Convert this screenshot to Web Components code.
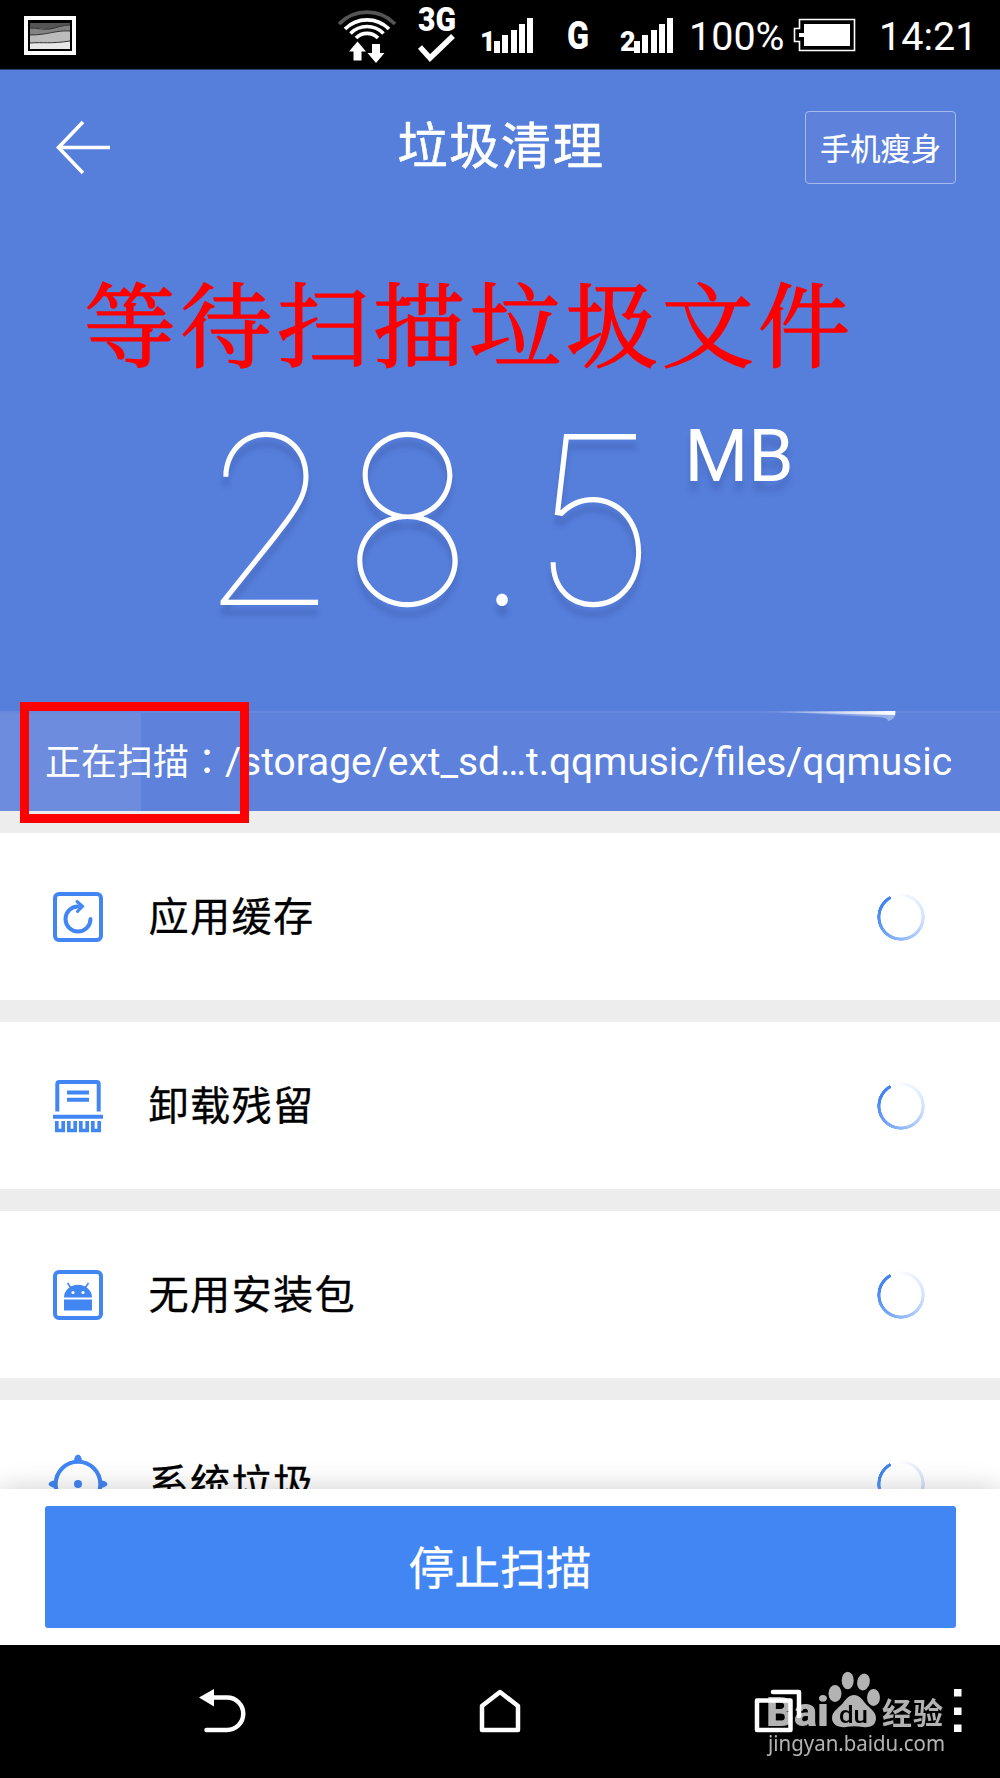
<!DOCTYPE html>
<html lang="zh-CN">
<head>
<meta charset="utf-8">
<title>垃圾清理</title>
<style>
  body {
    margin: 0;
    width: 1000px;
    height: 1778px;
    overflow: hidden;
    background: #ededed;
    font-family: Roboto, "Noto Sans CJK SC", sans-serif;
  }
</style>
</head>
<body>
<cleaner-app></cleaner-app>

<script>
/**
 * Creates a template from a string of markup.
 */
const html = (markup) => {
  const template = document.createElement('template')
  template.innerHTML = markup
  return template
}

/**
 * Registers an element that only shows its template.
 */
const define = (name, template) => {
  customElements.define(name, class extends HTMLElement {
    constructor () {
      super()
      this.attachShadow({ mode: 'open' })
        .appendChild(template.content.cloneNode(true))
    }
  })
}

// Signal bars with the number of the sim card.
define('signal-bars', html(`
  <style>
    :host { display: block; width: 55px; height: 36px; }
    .bars { display: flex; align-items: flex-end; gap: 2.2px; height: 36px; }
    .sim { width: 12px; font: 900 27px/20px Roboto, sans-serif; height: 21px; }
    i { width: 6px; background: #fff; }
  </style>
  <div class="bars">
    <span class="sim"><slot></slot></span>
    <i style="height: 12px"></i>
    <i style="height: 18px"></i>
    <i style="height: 23px"></i>
    <i style="height: 29px"></i>
    <i style="height: 35px"></i>
  </div>
`))

define('status-bar', html(`
  <style>
    :host {
      display: flex;
      align-items: flex-start;
      box-sizing: border-box;
      height: 70px;
      background: #000;
      border-bottom: 1px solid #2c4070;
      color: #fff;
    }
    svg { display: block; flex: none; }
    signal-bars { margin-top: 16.500px; flex: none; }
    .text { font-size: 39.500px; line-height: 47px; margin-top: 13px; flex: none; white-space: nowrap; }
  </style>
  <svg width="54" height="56" style="margin-left: 24px">
    <rect x="2" y="18" width="48" height="35" fill="#000" stroke="#fff" stroke-width="4"/>
    <rect x="6" y="23" width="40" height="26" fill="#bbb"/>
    <path d="M6 23h40v2c-8 0-13 6-22 4-6 0-10-1-18-1z" fill="#555"/>
    <path d="M6 28c8 0 14 2 20 1s12-4 20-4v6c-14-1-22 4-40 4z" fill="#828282"/>
    <path d="M6 43c14-1 20 1 40-2v8H6z" fill="#e8e8e8"/>
    <path d="M6 28c8 0 14 2 20 1s12-4 20-4M6 35c18 0 26-5 40-4M6 43c14-1 20 1 40-2" fill="none" stroke="#333"/>
  </svg>
  <svg width="60" height="66" style="margin-left: 259px" fill="none" stroke="#fff" stroke-width="3.600">
    <path d="M2 24A39 39 0 0 1 58 24" stroke="#555"/>
    <path d="M8 29A31 31 0 0 1 52 29"/>
    <path d="M13.500 33.500A23 23 0 0 1 46.500 33.500"/>
    <path d="M19 38A15.500 15.500 0 0 1 41 38"/>
    <path d="M20.500 41.500l8.500 10h-4.500v9h-8v-9H12zM39 63l8.500-10H43v-9h-8v9h-4.500z" fill="#fff" stroke="none"/>
  </svg>
  <svg width="44" height="66" style="margin-left: 19px">
    <text x="2" y="31" font-family="Roboto, sans-serif" font-weight="900" font-size="33" fill="#fff" textLength="38" lengthAdjust="spacingAndGlyphs">3G</text>
    <path d="M4 47l10 11 23-22" fill="none" stroke="#fff" stroke-width="5.500"/>
  </svg>
  <signal-bars style="margin-left: 20px">1</signal-bars>
  <svg width="28" height="60" style="margin-left: 31px">
    <text x="1" y="48.500" font-family="Roboto, sans-serif" font-weight="900" font-size="38" fill="#fff" textLength="22" lengthAdjust="spacingAndGlyphs">G</text>
  </svg>
  <signal-bars style="margin-left: 26px">2</signal-bars>
  <span class="text" style="margin-left: 14px; width: 97px">100%</span>
  <svg width="64" height="56" style="margin-left: 7px" fill="none" stroke="#fff" stroke-width="1.600">
    <path d="M6.500 19.500h55v31h-55v-9H1.500v-13h5z"/>
    <path d="M11 24h46v22H11v-9H6v-4h5z" fill="#fff" stroke="none"/>
  </svg>
  <span class="text" style="margin-left: 22px">14:21</span>
`))

define('title-bar', html(`
  <style>
    :host {
      display: grid;
      grid-template-columns: 1fr auto 1fr;
      align-items: center;
      height: 154px;
      padding: 0 44px 0 56px;
      color: #fff;
    }
    h1 { margin: 0 0 0 -10px; font-size: 50.200px; font-weight: 400; line-height: 60px; letter-spacing: 1.500px; -webkit-text-stroke: .6px; }
    button {
      justify-self: end;
      box-sizing: border-box;
      width: 151px;
      height: 73px;
      padding: 0 0 2px;
      margin-top: 1px;
      border: 1px solid #a6bbec;
      border-radius: 4px;
      background: #5e82db;
      color: #fff;
      font: 30.300px "Noto Sans CJK SC", sans-serif;
      -webkit-text-stroke: .2px;
    }
  </style>
  <svg width="56" height="56" viewBox="0 0 56 56" fill="none" stroke="#fff" stroke-width="3.600">
    <path d="M27 3L2.500 28.500 27 54M2 28.500h52"/>
  </svg>
  <h1><slot></slot></h1>
  <button>手机瘦身</button>
`))

define('scan-total', html(`
  <style>
    :host { display: block; height: 487px; color: #fff; }
    p {
      box-sizing: border-box;
      height: 156px;
      margin: 0 0 0 84px;
      padding-top: 40px;
      font: 92px/112px "Noto Serif CJK SC", "Noto Sans CJK SC", serif;
      letter-spacing: 4.300px;
      color: #f00;
      white-space: nowrap;
      -webkit-text-stroke: 1.500px;
    }
    .total {
      display: flex;
      align-items: flex-start;
      margin-left: 199.500px;
      text-shadow: 0 10px 6px rgba(50, 80, 150, .3);
    }
    .size {
      flex: none;
      width: 485px;
      font: 100 235px/280px Inter, sans-serif;
      letter-spacing: 3.400px;
      transform: scaleX(.945);
      transform-origin: left;
    }
    .unit { font-size: 73px; line-height: 86px; margin-top: 33px; }
  </style>
  <p><slot name="hint"></slot></p>
  <div class="total">
    <span class="size"><slot name="size"></slot></span>
    <span class="unit"><slot name="unit"></slot></span>
  </div>
`))

define('scan-path', html(`
  <style>
    :host {
      display: flex;
      align-items: center;
      position: relative;
      box-sizing: border-box;
      height: 100px;
      padding-left: 45px;
      border-top: 2px solid #6688de;
      background: linear-gradient(90deg, #6d8cde 141px, #5e82db 141px);
      color: #fff;
      font-size: 36px;
      white-space: nowrap;
    }
    .state, .colon { padding-bottom: 7px; }
    .colon { font-family: "Noto Sans CJK TC"; }
    .path { font-size: 38.900px; padding-bottom: 2px; }
    .streak { position: absolute; left: 760px; top: -2px; }
    .mark {
      position: absolute;
      left: 19.500px;
      top: -11px;
      box-sizing: border-box;
      width: 229.500px;
      height: 121px;
      border: 9px solid #f00;
    }
  </style>
  <svg class="streak" width="140" height="14">
    <defs>
      <linearGradient id="glow"><stop stop-color="#fff" stop-opacity="0"/><stop offset="1" stop-color="#fff"/></linearGradient>
    </defs>
    <path d="M0 0h136q0 8-8 10 0-4-12-4z" fill="url(#glow)" opacity=".4"/>
    <path d="M0 1L135 0v4z" fill="url(#glow)"/>
  </svg>
  <span class="state">正在扫描</span><span class="colon">：</span><span class="path"><slot></slot></span>
  <div class="mark"></div>
`))

// Ring that fades out clockwise from its round head.
define('loading-ring', html(`
  <style>
    :host { display: block; width: 48px; height: 48px; }
    div {
      width: 48px;
      height: 48px;
      border-radius: 50%;
      background: conic-gradient(from -28deg, rgba(66, 134, 243, 0) 4%, rgba(66, 134, 243, .25) 35%, rgba(66, 134, 243, .65) 62%, #4286f3 88%);
      mask: radial-gradient(circle closest-side, transparent 20.200px, #000 20.800px, #000 23.600px, transparent 24px);
    }
  </style>
  <div></div>
`))

const icons = {
  cache: `
    <rect x="7" y="7" width="46" height="46" rx="4"/>
    <path d="M30 19.500A12.500 12.500 0 1 0 42.500 32" stroke-linecap="round"/>
    <path d="M29 14.500l5.500 4.800-5 5.200" stroke-width="3" stroke-linecap="round"/>`,
  uninstall: `
    <path d="M9.300 35.500V8q0-2 2-2h37.400q2 0 2 2v27.500M19 16.500h22M19 23.800h22M5 40.700h50"/>
    <path d="M8.800 45v9.500h6.400v-9.500M20.800 45v9.500h6.400v-9.500M32.800 45v9.500h6.400v-9.500M44.800 45v9.500h6.400v-9.500" stroke-width="3.700"/>`,
  apk: `
    <rect x="7" y="7" width="46" height="46" rx="4"/>
    <path d="M16 32.500a14 12.700 0 0 1 28 0zM16 34.500h28v11H16z" fill="#4286f3" stroke="none"/>
    <path d="M19.500 18l3.500 5M40.500 18l-3.500 5" stroke-width="1.600"/>
    <circle cx="25" cy="27.500" r="1.600" fill="#fff" stroke="none"/><circle cx="35" cy="27.500" r="1.600" fill="#fff" stroke="none"/>`,
  system: `
    <circle cx="30" cy="30" r="22.300"/>
    <circle cx="30" cy="30" r="4" fill="#4286f3" stroke="none"/>
    <path d="M26 8q0-7 4-7.500 4 .5 4 7.500zM8 26q-7 1-7.500 4 .5 3 7.500 4zM52 26q7 1 7.500 4-.5 3-7.500 4z" fill="#4286f3" stroke="none"/>`
}

customElements.define('scan-item',

  /**
   * One kind of junk in the list, with an icon and a loading ring.
   */
  class extends HTMLElement {
    constructor () {
      super()
      this.attachShadow({ mode: 'open' }).innerHTML = `
        <style>
          :host {
            display: flex;
            align-items: center;
            box-sizing: border-box;
            flex: none;
            height: 167px;
            padding: 0 75px 0 47.500px;
            background: #fff;
            color: #000;
            font-size: 40.200px;
            letter-spacing: 1.300px;
          }
          svg { margin-top: 1px; }
          .label { flex: 1; margin: 3px 0 0 41px; line-height: 60px; -webkit-text-stroke: .3px; }
        </style>
        <svg width="60" height="60" fill="none" stroke="#4286f3" stroke-width="4"></svg>
        <span class="label"><slot></slot></span>
        <loading-ring></loading-ring>
      `
    }

    connectedCallback () {
      this.shadowRoot.querySelector('svg').innerHTML = icons[this.getAttribute('icon')]
    }
  }
)

define('scan-list', html(`
  <style>
    :host {
      display: flex;
      flex-direction: column;
      gap: 22px;
      box-sizing: border-box;
      height: 678px;
      padding-top: 22px;
      overflow: hidden;
    }
  </style>
  <slot></slot>
`))

define('stop-panel', html(`
  <style>
    :host {
      display: block;
      position: relative;
      box-sizing: border-box;
      height: 156px;
      padding: 17px 44.500px 0;
      background: #fff;
      box-shadow: 0 0 26px rgba(0, 0, 0, .2);
    }
    button {
      display: block;
      width: 100%;
      height: 122px;
      padding: 0 0 4px;
      border: 0;
      border-radius: 3px;
      background: #4286f3;
      color: #fff;
      font: 45.800px "Noto Sans CJK SC", sans-serif;
      -webkit-text-stroke: .3px;
    }
  </style>
  <button><slot></slot></button>
`))

define('nav-bar', html(`
  <style>
    :host { display: flex; align-items: flex-start; position: relative; height: 133px; padding-top: 40px; box-sizing: border-box; background: #000; }
    svg { flex: none; }
  </style>
  <svg width="50" height="52" style="margin-left: 199px" fill="none" stroke="#fff" stroke-width="4.500" stroke-linecap="round">
    <path d="M12 12.500h16a16 16 0 0 1 0 32.500H7.500"/>
    <path d="M0 12.500L15 4v17.500z" fill="#fff" stroke="none"/>
  </svg>
  <svg width="44" height="52" style="margin-left: 228px" fill="none" stroke="#fff" stroke-width="4.500" stroke-linejoin="round">
    <path d="M5 21L23 7l18 14v24H5z"/>
  </svg>
  <svg width="50" height="52" style="margin-left: 233px" fill="none" stroke="#fff" stroke-width="4.500" stroke-linejoin="round" stroke-linecap="round">
    <path d="M3 15.500h33.500v29.500H3zM19 7h26v24"/>
  </svg>
  <svg width="10" height="52" style="margin-left: 149px" fill="#fff">
    <path d="M1 4h7.500v7.500H1zM1 22.500h7.500V30H1zM1 39.500h7.500V47H1z"/>
  </svg>
`))

define('site-mark', html(`
  <style>
    :host { display: block; position: absolute; left: 760px; top: 1668px; opacity: .7; }
    svg { display: block; }
  </style>
  <svg width="200" height="96" fill="#fff" font-family="Roboto, sans-serif">
    <text x="6" y="58" font-size="40" font-weight="900" textLength="63" lengthAdjust="spacingAndGlyphs">Bai</text>
    <ellipse cx="75" cy="25.500" rx="6.500" ry="8.500"/>
    <ellipse cx="87.700" cy="12.500" rx="6" ry="8.800"/>
    <ellipse cx="103.500" cy="14" rx="6.300" ry="8.500" transform="rotate(12 103.500 14)"/>
    <ellipse cx="113.500" cy="29.500" rx="6.500" ry="8.500"/>
    <path d="M94 27c5 0 8 4 11 8s11 8 11 15c0 8-7 10-13 9-6-1-12-1-17 0-7 1-14-2-14-9s8-11 11-15 6-8 11-8z"/>
    <text x="79" y="54.500" font-size="24" font-weight="500" fill="#000" textLength="29" lengthAdjust="spacingAndGlyphs">du</text>
    <text x="122" y="56" font-family="Noto Sans CJK SC" font-size="30" font-weight="700" textLength="61">经验</text>
    <text x="8" y="83" font-family="Noto Sans" font-size="22" textLength="177" lengthAdjust="spacingAndGlyphs">jingyan.baidu.com</text>
  </svg>
`))

define('cleaner-app', html(`
  <style>
    :host { display: block; }
    header { background: #567edb; }
  </style>
  <status-bar></status-bar>
  <header>
    <title-bar>垃圾清理</title-bar>
    <scan-total>
      <span slot="hint">等待扫描垃圾文件</span>
      <span slot="size">28.5</span>
      <span slot="unit">MB</span>
    </scan-total>
    <scan-path>/storage/ext_sd…t.qqmusic/files/qqmusic</scan-path>
  </header>
  <scan-list>
    <scan-item icon="cache">应用缓存</scan-item>
    <scan-item icon="uninstall">卸载残留</scan-item>
    <scan-item icon="apk">无用安装包</scan-item>
    <scan-item icon="system">系统垃圾</scan-item>
  </scan-list>
  <stop-panel>停止扫描</stop-panel>
  <nav-bar></nav-bar>
  <site-mark></site-mark>
`))
</script>
</body>
</html>
